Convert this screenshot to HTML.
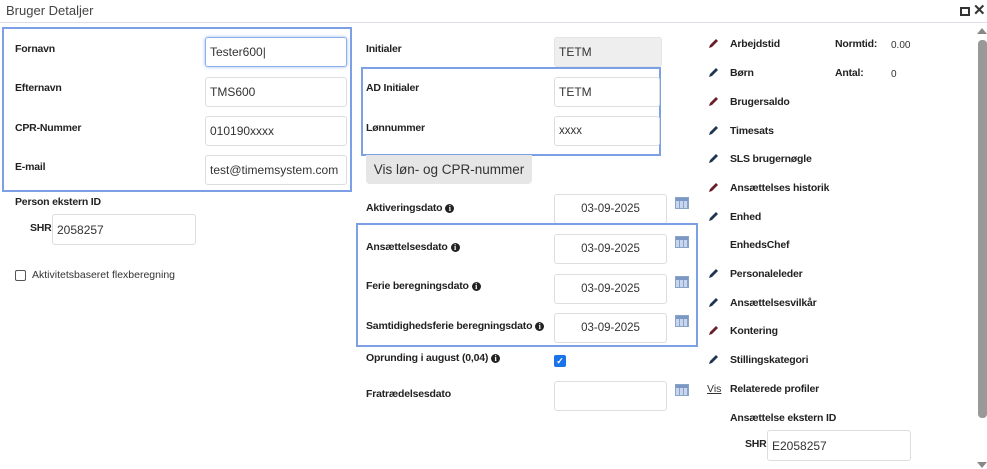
<!DOCTYPE html>
<html><head><meta charset="utf-8"><style>
*{box-sizing:border-box;margin:0;padding:0}
body{width:987px;height:469px;overflow:hidden;background:#fff;font-family:"Liberation Sans",Arial,sans-serif;color:#222;position:relative}
.a{position:absolute}
.l{position:absolute;font-size:10.5px;letter-spacing:-0.2px;font-weight:bold;color:#222;line-height:14px;white-space:nowrap}
.i{position:absolute;border:1px solid #ddd;border-radius:3px;background:#fff;font-size:12px;color:#333;padding-left:4px;display:flex;align-items:center;white-space:nowrap}
.c{justify-content:center;padding-left:0;font-size:11.5px}
.box{position:absolute;border:2px solid #7c9fe6}
.cal{position:absolute;width:14px;height:12px;border:1px solid #8aa3c9;background:repeating-linear-gradient(90deg,#c8d6ee 0 3px,#8aa3c9 3px 4px),#c8d6ee}
.cal:before{content:"";position:absolute;left:0;right:0;top:0;height:3px;background:#7b97c4}
.inf{display:inline-block;width:9px;height:9px;border-radius:50%;background:#222;color:#fff;font-size:8px;text-align:center;line-height:9px;font-family:"Liberation Serif",serif;margin-left:3px;vertical-align:0;letter-spacing:0}
.pen{position:absolute;left:707px;width:12px;height:12px}
</style></head><body>
<div class="a" style="left:6px;top:3px;font-size:13px;color:#444">Bruger Detaljer</div>
<div class="a" style="left:960px;top:7px;width:10px;height:9px;border:2px solid #333"></div>
<div class="a" style="left:973px;top:1px;font-size:15px;font-weight:bold;color:#333">✕</div>
<div class="a" style="left:0;top:22px;width:987px;height:1px;background:#dde"></div>

<div class="box" style="left:2px;top:27px;width:350px;height:165px"></div>
<div class="l" style="left:15px;top:42px">Fornavn</div>
<div class="i" style="left:205px;top:37px;width:142px;height:30px;border-color:#8fb0ee;box-shadow:0 0 3px #9ab8f0">Tester600|</div>
<div class="l" style="left:15px;top:81px">Efternavn</div>
<div class="i" style="left:205px;top:77px;width:142px;height:30px">TMS600</div>
<div class="l" style="left:15px;top:121px">CPR-Nummer</div>
<div class="i" style="left:205px;top:116px;width:142px;height:30px">010190xxxx</div>
<div class="l" style="left:15px;top:160px">E-mail</div>
<div class="i" style="left:205px;top:155px;width:142px;height:30px">test@timemsystem.com</div>

<div class="l" style="left:15px;top:195px">Person ekstern ID</div>
<div class="l" style="left:30px;top:221px">SHR</div>
<div class="i" style="left:52px;top:214px;width:144px;height:31px">2058257</div>
<div class="a" style="left:15px;top:270px;width:11px;height:11px;border:1px solid #555;border-radius:2px"></div>
<div class="a" style="left:32px;top:269px;font-size:10.5px;color:#333">Aktivitetsbaseret flexberegning</div>

<div class="l" style="left:366px;top:42px">Initialer</div>
<div class="i" style="left:554px;top:37px;width:108px;height:30px;background:#eee;border-color:#e4e4e4">TETM</div>
<div class="box" style="left:361px;top:67px;width:300px;height:89px"></div>
<div class="l" style="left:366px;top:81px">AD Initialer</div>
<div class="i" style="left:554px;top:77px;width:106px;height:30px">TETM</div>
<div class="l" style="left:366px;top:121px">Lønnummer</div>
<div class="i" style="left:554px;top:116px;width:106px;height:30px;font-size:11.5px">xxxx</div>
<div class="a" style="left:366px;top:155px;width:166px;height:29px;background:#e6e6e6;border-radius:0 0 4px 4px;font-size:13.5px;color:#333;text-align:center;line-height:29px">Vis løn- og CPR-nummer</div>

<div class="l" style="left:366px;top:201px">Aktiveringsdato<span class="inf">i</span></div>
<div class="i c" style="left:554px;top:194px;width:113px;height:30px">03-09-2025</div>
<div class="cal" style="left:675px;top:197px"></div>
<div class="box" style="left:356px;top:223px;width:342px;height:124px"></div>
<div class="l" style="left:366px;top:240px">Ansættelsesdato<span class="inf">i</span></div>
<div class="i c" style="left:554px;top:234px;width:113px;height:30px">03-09-2025</div>
<div class="cal" style="left:675px;top:236px"></div>
<div class="l" style="left:366px;top:279px">Ferie beregningsdato<span class="inf">i</span></div>
<div class="i c" style="left:554px;top:274px;width:113px;height:30px">03-09-2025</div>
<div class="cal" style="left:675px;top:276px"></div>
<div class="l" style="left:366px;top:319px">Samtidighedsferie beregningsdato<span class="inf">i</span></div>
<div class="i c" style="left:554px;top:313px;width:113px;height:30px">03-09-2025</div>
<div class="cal" style="left:675px;top:315px"></div>
<div class="l" style="left:366px;top:351px">Oprunding i august (0,04)<span class="inf">i</span></div>
<div class="a" style="left:554px;top:355px;width:12px;height:12px;background:#1a73e8;border-radius:2px;color:#fff;font-size:9px;line-height:12px;text-align:center;font-weight:bold">✓</div>
<div class="l" style="left:366px;top:387px">Fratrædelsesdato</div>
<div class="i c" style="left:554px;top:381px;width:113px;height:30px"></div>
<div class="cal" style="left:675px;top:384px"></div>

<svg width="0" height="0" style="position:absolute"><defs><symbol id="p" viewBox="0 0 12 12"><path d="M2 10 L3 7 L9 1 L11 3 L5 9 Z" /></symbol></defs></svg>
<svg class="pen" style="top:38px" fill="#6b1f2a"><use href="#p"/></svg>
<div class="l" style="left:730px;top:37px">Arbejdstid</div>
<div class="l" style="left:835px;top:37px">Normtid:</div>
<div class="a" style="left:891px;top:40px;font-size:10px;color:#333">0.00</div>
<svg class="pen" style="top:67px" fill="#1f3550"><use href="#p"/></svg>
<div class="l" style="left:730px;top:66px">Børn</div>
<div class="l" style="left:835px;top:66px">Antal:</div>
<div class="a" style="left:891px;top:69px;font-size:10px;color:#333">0</div>
<svg class="pen" style="top:96px" fill="#6b1f2a"><use href="#p"/></svg>
<div class="l" style="left:730px;top:95px">Brugersaldo</div>
<svg class="pen" style="top:125px" fill="#1f3550"><use href="#p"/></svg>
<div class="l" style="left:730px;top:124px">Timesats</div>
<svg class="pen" style="top:153px" fill="#1f3550"><use href="#p"/></svg>
<div class="l" style="left:730px;top:152px">SLS brugernøgle</div>
<svg class="pen" style="top:182px" fill="#6b1f2a"><use href="#p"/></svg>
<div class="l" style="left:730px;top:181px">Ansættelses historik</div>
<svg class="pen" style="top:211px" fill="#1f3550"><use href="#p"/></svg>
<div class="l" style="left:730px;top:210px">Enhed</div>
<div class="l" style="left:730px;top:238px">EnhedsChef</div>
<svg class="pen" style="top:268px" fill="#1f3550"><use href="#p"/></svg>
<div class="l" style="left:730px;top:267px">Personaleleder</div>
<svg class="pen" style="top:297px" fill="#1f3550"><use href="#p"/></svg>
<div class="l" style="left:730px;top:296px">Ansættelsesvilkår</div>
<svg class="pen" style="top:325px" fill="#6b1f2a"><use href="#p"/></svg>
<div class="l" style="left:730px;top:324px">Kontering</div>
<svg class="pen" style="top:354px" fill="#1f3550"><use href="#p"/></svg>
<div class="l" style="left:730px;top:353px">Stillingskategori</div>
<div class="a" style="left:707px;top:383px;font-size:10.5px;color:#333;text-decoration:underline">Vis</div>
<div class="l" style="left:730px;top:382px">Relaterede profiler</div>
<div class="l" style="left:730px;top:411px">Ansættelse ekstern ID</div>
<div class="l" style="left:745px;top:437px">SHR</div>
<div class="i" style="left:767px;top:430px;width:144px;height:31px">E2058257</div>

<div class="a" style="left:977px;top:28px;width:0;height:0;border-left:5px solid transparent;border-right:5px solid transparent;border-bottom:6px solid #888"></div>
<div class="a" style="left:978px;top:40px;width:9px;height:378px;background:#999;border-radius:4px"></div>
<div class="a" style="left:977px;top:462px;width:0;height:0;border-left:5px solid transparent;border-right:5px solid transparent;border-top:6px solid #888"></div>
</body></html>
